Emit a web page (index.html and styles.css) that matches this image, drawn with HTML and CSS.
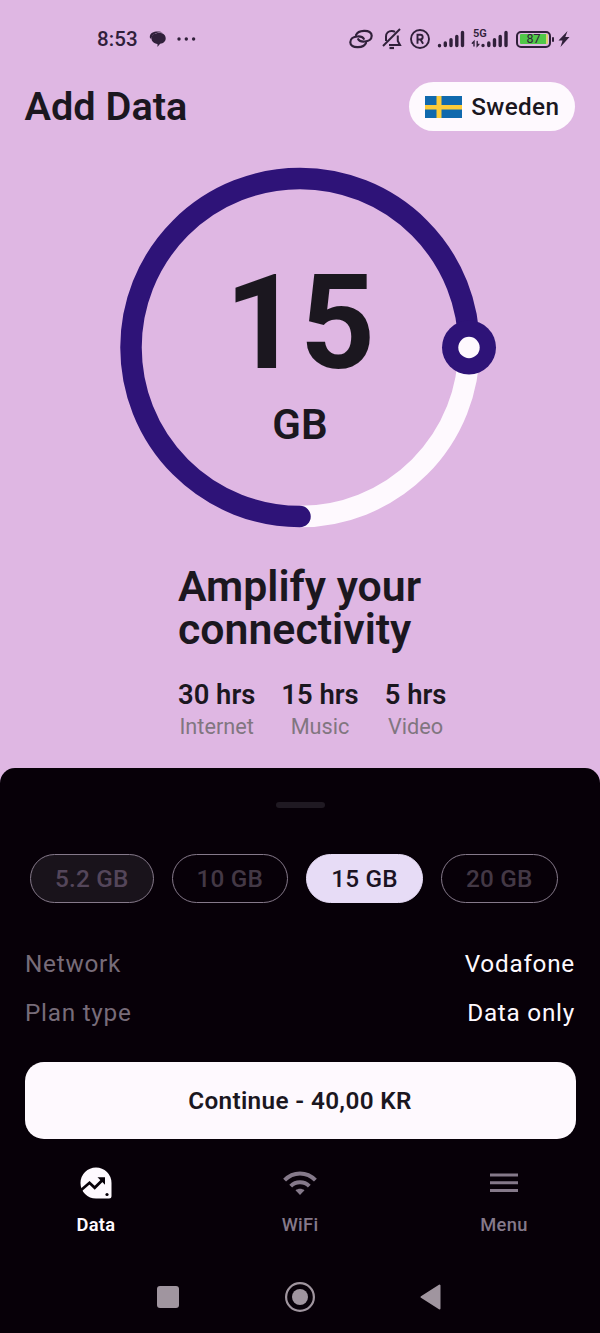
FILE: index.html
```html
<!DOCTYPE html>
<html lang="en">
<head>
<meta charset="utf-8">
<title>Add Data</title>
<link rel="stylesheet" href="styles.css">
</head>
<body>
<div class="screen">
  <div class="status">
    <span class="time">8:53</span>
    <svg class="chat" width="17" height="16" viewBox="0 0 17 16"><path d="M.8 6C.8 2 4.500.4 8.500.4c2.300 0 4 .4 5.200 1.100C8 .9 3 2.500 2.300 8 1.300 7.500.8 7 .8 6Z" fill="#30203a"/><path d="M2.500 7.500C2.500 4.200 5.500 2 10 2s6.700 2 6.700 5.500c0 2.800-2.300 4.900-5.500 5.300-1 .8-1.600 2-2.700 3.100V12.900C4.800 12.400 2.500 10.200 2.500 7.500Z" fill="#30203a"/></svg>
    <svg class="dots" width="19" height="4" viewBox="0 0 19 4" fill="#30203a"><circle cx="2" cy="2" r="1.700"/><circle cx="9.300" cy="2" r="1.700"/><circle cx="16.600" cy="2" r="1.700"/></svg>
    <div class="icons">
      <svg class="link" width="24" height="20" viewBox="0 0 24 20" fill="none" stroke="#30203a" stroke-width="2.200" stroke-linecap="round"><path d="M7 6.200C8 3.500 11 2 15 1.900c4.600-.2 7.700 1.400 7.700 4.800 0 3.400-3 5.600-7.200 5.800-3.200.2-5.500-.8-6.300-2.300"/><path d="M17 13.800c-1 2.700-4 4.200-8 4.300-4.600.2-7.700-1.400-7.700-4.800 0-3.400 3-5.600 7.200-5.800 3.200-.2 5.500.8 6.300 2.300"/></svg>
      <svg width="20" height="22" viewBox="0 0 20 22" fill="none" stroke="#30203a" stroke-width="2"><path d="M4 13V8.500C4 5 6.500 3 9.700 3c1.300 0 2.300.3 3.300.9M15.800 7.500V13l2.200 4H7"/><path d="M1 18 18 1"/><path d="M7.500 20h4.500" stroke-width="2.200"/></svg>
      <svg class="registered" width="20" height="20" viewBox="0 0 20 20" fill="none" stroke="#30203a" stroke-width="1.900"><circle cx="10" cy="10" r="9"/><path d="M7.500 14.800V5.700h2.800a2.400 2.400 0 0 1 0 4.800H7.500M10.500 10.500l2.600 4.300"/></svg>
      <svg width="28" height="18" viewBox="0 0 28 18" stroke="#30203a" stroke-width="3.400" stroke-linecap="round"><path d="M2.500 15.500v.2M8.300 13v2.500M14 9.800v5.700M19.800 6.500v9M25.500 2.500v13"/></svg>
      <div class="mobile">
        <span class="gen">5G</span>
        <svg width="37" height="18" viewBox="0 0 37 18" fill="none" stroke="#30203a" stroke-linecap="round"><path d="M3 16v-4.500L1.300 13.200M6.200 11.500V16l1.700-1.700" stroke-width="1.400"/><path d="M12 15.500v.1M17.800 13v2.500M23.500 9.800v5.700M29.200 6.500v9M35 2.500v13" stroke-width="3.400"/></svg>
      </div>
      <div class="battery"><span class="charge">87</span></div>
      <svg width="12" height="18" viewBox="0 0 12 18"><path d="M9.500 1 .5 10.500h4L2.500 17l9-10H7.300Z" fill="#30203a"/></svg>
    </div>
  </div>

  <header class="header">
    <h1 class="title">Add Data</h1>
    <button class="country">
      <svg width="37" height="22" viewBox="0 0 37 22"><path fill="#1069ad" d="M0 0h37v22H0z"/><path fill="#fccb38" d="M11.500 0h5v22h-5zM0 9h37v4.500H0z"/></svg>
      <span>Sweden</span>
    </button>
  </header>

  <div class="gauge">
    <svg class="ring" width="380" height="362" viewBox="0 0 380 362" fill="none">
      <path d="M350 180.500A169 169 0 0 1 181 349.500" stroke="#fef9fe" stroke-width="21.500"/>
      <path d="M181 349.500A169 169 0 1 1 350 180.500" stroke="#2e1378" stroke-width="21.500" stroke-linecap="round"/>
      <circle cx="350" cy="180.500" r="27" fill="#2e1378"/>
      <circle cx="350" cy="180.500" r="10.700" fill="#fef9fe"/>
    </svg>
    <div class="reading"><div class="amount">15</div><div class="unit">GB</div></div>
  </div>

  <section class="summary">
    <h2 class="tagline">Amplify your<br>connectivity</h2>
    <div class="stats">
      <div class="stat"><b>30 hrs</b><span>Internet</span></div>
      <div class="stat"><b>15 hrs</b><span>Music</span></div>
      <div class="stat"><b>5 hrs</b><span>Video</span></div>
    </div>
  </section>

  <section class="sheet">
    <div class="handle"></div>
    <div class="chips">
      <button class="chip first">5.2 GB</button>
      <button class="chip">10 GB</button>
      <button class="chip selected">15 GB</button>
      <button class="chip">20 GB</button>
    </div>
    <dl class="details">
      <div class="row"><dt>Network</dt><dd>Vodafone</dd></div>
      <div class="row"><dt>Plan type</dt><dd>Data only</dd></div>
    </dl>
    <button class="continue">Continue - 40,00 KR</button>
    <nav class="tabs">
      <div class="tab active">
        <svg width="32" height="32" viewBox="0 0 32 32"><path d="M16 .5a15.500 15.500 0 0 1 15.500 15.500v13a2.500 2.500 0 0 1-2.500 2.500H16A15.500 15.500 0 0 1 16 .5Z" fill="#fef9fe"/><path d="m0 24 9.500-8.200 5.200 5L23 12.500" fill="none" stroke="#070008" stroke-width="2.800"/><path d="M17.500 10.200H25v7.500Z" fill="#070008"/><circle cx="27" cy="27.500" r="1.600" fill="#070008"/></svg>
        <span>Data</span>
      </div>
      <div class="tab">
        <svg width="34" height="32" viewBox="0 0 34 32" fill="none" stroke="#85798a" stroke-width="4"><path d="M1.600 13.100C10.200 4.200 23.800 4.200 32.400 13.100"/><path d="M7.700 19.200c5.200-5.200 13.400-5.200 18.600 0"/><path d="M12.500 23.300c2.700-2 6.300-2 9 0L17 28Z" fill="#85798a" stroke="none"/></svg>
        <span>WiFi</span>
      </div>
      <div class="tab">
        <svg width="28" height="32" viewBox="0 0 28 32" fill="#85798a"><path d="M0 6.500h28v3H0zM0 14.200h28v3H0zM0 22h28v3H0z"/></svg>
        <span>Menu</span>
      </div>
    </nav>
    <div class="system">
      <svg width="22" height="22" viewBox="0 0 22 22"><rect width="22" height="22" rx="3" fill="#a0959f"/></svg>
      <svg width="30" height="30" viewBox="0 0 30 30"><circle cx="15" cy="15" r="13.900" fill="none" stroke="#a0959f" stroke-width="2.200"/><circle cx="15" cy="15" r="8" fill="#a0959f"/></svg>
      <svg width="21" height="26" viewBox="0 0 21 26"><path d="M1.500 13 19.500 1.500v23Z" fill="#a0959f" stroke="#a0959f" stroke-width="2" stroke-linejoin="round"/></svg>
    </div>
  </section>
</div>
</body>
</html>
```
FILE: styles.css
```css
* { box-sizing: border-box; }
body { margin: 0; font-family: Roboto, "Liberation Sans", sans-serif; color: #1b171f; }
button { font-family: inherit; border: 0; margin: 0; padding: 0; color: inherit; }
svg { display: block; flex: none; }
h1, h2, dl, dd { margin: 0; }
.screen { width: 600px; height: 1333px; background: #dfb7e3; display: flex; flex-direction: column; overflow: hidden; }

.status { height: 82px; padding: 28px 30px 32px 97px; display: flex; align-items: center; color: #30203a; }
.time { font-size: 20.500px; font-weight: 500; letter-spacing: .1px; line-height: 22px; width: 52px; }
.dots { margin-left: 10.500px; }
.icons { margin-left: auto; display: flex; align-items: center; gap: 7px; }
.link { margin-right: 2px; }
.registered { margin-left: 1px; }
.mobile { display: grid; margin: 0 1px 0 -1px; }
.mobile > * { grid-area: 1 / 1; }
.gen { font-size: 11px; font-weight: 600; line-height: 10px; margin: -1px 0 0 2px; }
.battery { width: 35px; height: 17px; border: 2px solid #30203a; border-radius: 5px; padding: 1.500px; display: flex; position: relative; }
.battery::after { content: ""; position: absolute; left: 34px; top: 4px; width: 2px; height: 5px; background: #30203a; border-radius: 1px; }
.charge { flex: 1; background: linear-gradient(90deg, #50c848 92%, #dbd46e 92%); font-size: 12.500px; line-height: 10px; text-align: center; border-radius: 1px; }

.header { height: 49px; padding: 0 25px 0 24.500px; display: flex; align-items: center; justify-content: space-between; }
.title { font-size: 39.700px; font-weight: 600; line-height: 49px; }
.country { width: 166px; height: 49px; border-radius: 25px; background: #fef9fe; display: flex; align-items: center; justify-content: center; gap: 9.500px; font-size: 24.300px; font-weight: 500; letter-spacing: .35px; }

.gauge { display: grid; width: 380px; height: 362px; margin: 36px 0 0 119px; }
.gauge > * { grid-area: 1 / 1; }
.reading { width: 362px; text-align: center; padding-top: 90px; }
.amount { font-size: 131px; line-height: 132px; font-weight: 700; }
.unit { font-size: 42px; line-height: 48px; font-weight: 600; margin-top: 12px; }

.summary { padding: 35.500px 0 0 178px; height: 239px; }
.tagline { font-size: 42.800px; line-height: 43px; font-weight: 600; }
.stats { display: flex; gap: 26px; margin-top: 27.500px; }
.stat { display: flex; flex-direction: column; align-items: center; }
.stat b { font-size: 27.400px; line-height: 34px; font-weight: 600; }
.stat span { font-size: 21.700px; line-height: 29px; color: #817680; font-weight: 450; }

.sheet { flex: 1; background: #070008; border-radius: 15px 15px 0 0; padding: 34px 25px 0; }
.handle { width: 49px; height: 6px; border-radius: 3px; background: #1f1922; margin: 0 auto; }
.chips { display: flex; gap: 18px; margin: 46px 0 0 5px; }
.chip { width: 116.700px; height: 49px; border: 1.500px solid #85798a; border-radius: 25px; background: transparent; color: #433845; font-size: 24.300px; font-weight: 500; letter-spacing: .2px; }
.chip.first { width: 123.500px; background: #19131b; color: #54465a; }
.chip.selected { background: #e7dcf6; border-color: #e7dcf6; color: #1b1323; }
.details { padding-top: 36px; }
.row { display: flex; justify-content: space-between; height: 49px; line-height: 50px; font-size: 24.300px; letter-spacing: .75px; }
.row dt { color: #776c79; }
.row dd { color: #fef9fe; }
.continue { display: block; width: 551px; height: 77px; border-radius: 19px; background: #fef9fe; margin: 25px 0 0 -.5px; font-size: 24.300px; font-weight: 600; letter-spacing: .35px; }
.tabs { display: flex; justify-content: space-between; margin: 28px -10px 0; }
.tab { width: 162px; display: flex; flex-direction: column; align-items: center; gap: 14px; color: #85798a; font-size: 18.300px; line-height: 24px; font-weight: 500; letter-spacing: .3px; }
.tab.active { color: #fef9fe; font-weight: 600; }
.system { display: flex; justify-content: space-between; align-items: center; height: 32px; margin: 44px 134px 0 132px; }
```
